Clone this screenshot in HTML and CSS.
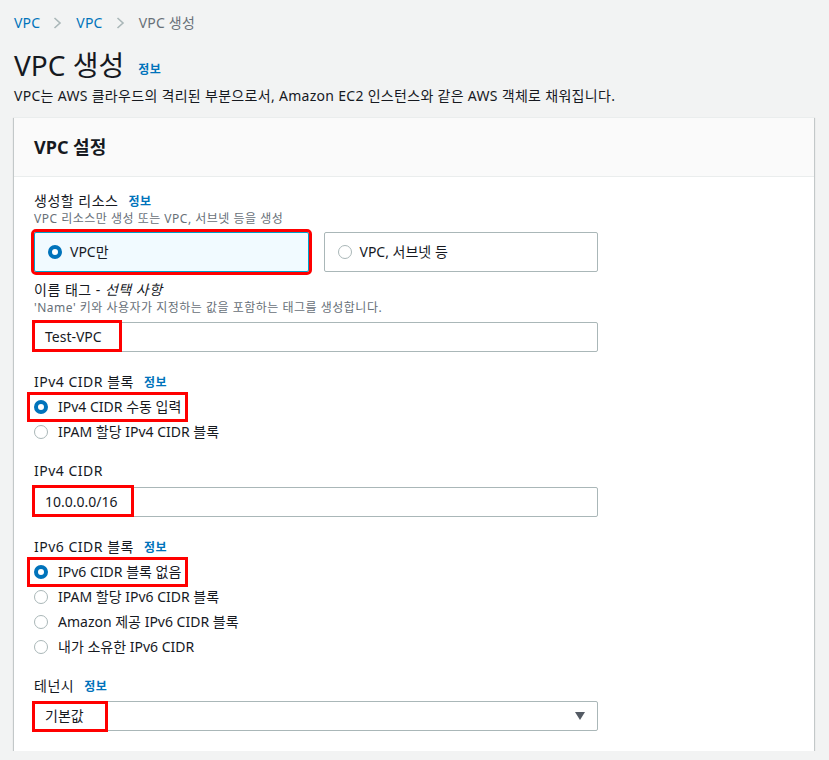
FILE: index.html
```html
<!DOCTYPE html>
<html lang="ko">
<head>
    <meta charset="utf-8">
    <title>VPC 생성</title>
    <link rel="stylesheet" href="styles.css">
</head>
<body>
    <div class="page">
        <!-- Breadcrumbs -->
        <nav class="breadcrumbs">
            <a class="crumb">VPC</a>
            <svg class="chevron" width="9" height="12" viewBox="0 0 9 12"><path d="M1.5 1 L7 6 L1.5 11" fill="none" stroke="#aab7b8" stroke-width="1.6"/></svg>
            <a class="crumb">VPC</a>
            <svg class="chevron" width="9" height="12" viewBox="0 0 9 12"><path d="M1.5 1 L7 6 L1.5 11" fill="none" stroke="#aab7b8" stroke-width="1.6"/></svg>
            <span class="crumb current">VPC 생성</span>
        </nav>

        <div class="page-header">
            <h1>VPC 생성 <a class="info title-info">정보</a></h1>
            <p class="page-desc">VPC는 AWS 클라우드의 격리된 부분으로서, Amazon EC2 인스턴스와 같은 AWS 객체로 채워집니다.</p>
        </div>

        <!-- Settings card -->
        <section class="card">
            <div class="card-header">
                <h2>VPC 설정</h2>
            </div>
            <div class="card-body">
                <div class="field first">
                    <div class="label">생성할 리소스 <a class="info">정보</a></div>
                    <div class="hint">VPC 리소스만 생성 또는 VPC, 서브넷 등을 생성</div>
                    <div class="tiles">
                        <label class="tile selected marked-outline">
                            <span class="radio on"></span>
                            <span>VPC만</span>
                        </label>
                        <label class="tile">
                            <span class="radio"></span>
                            <span>VPC, 서브넷 등</span>
                        </label>
                    </div>
                </div>

                <div class="field after-tiles">
                    <div class="label">이름 태그 - <i>선택 사항</i></div>
                    <div class="hint">'Name' 키와 사용자가 지정하는 값을 포함하는 태그를 생성합니다.</div>
                    <div class="input with-hint">
                        <span class="value mark mark-tag">Test-VPC</span>
                    </div>
                </div>

                <div class="field">
                    <div class="label">IPv4 CIDR 블록 <a class="info">정보</a></div>
                    <div class="radios">
                        <div class="radio-row"><span class="radio-item mark-row"><span class="radio on"></span>IPv4 CIDR 수동 입력</span></div>
                        <div class="radio-row"><span class="radio-item"><span class="radio"></span>IPAM 할당 IPv4 CIDR 블록</span></div>
                    </div>
                </div>

                <div class="field after-radios">
                    <div class="label">IPv4 CIDR</div>
                    <div class="input">
                        <span class="value mark mark-cidr">10.0.0.0/16</span>
                    </div>
                </div>

                <div class="field">
                    <div class="label">IPv6 CIDR 블록 <a class="info">정보</a></div>
                    <div class="radios">
                        <div class="radio-row"><span class="radio-item mark-row"><span class="radio on"></span>IPv6 CIDR 블록 없음</span></div>
                        <div class="radio-row"><span class="radio-item"><span class="radio"></span>IPAM 할당 IPv6 CIDR 블록</span></div>
                        <div class="radio-row"><span class="radio-item"><span class="radio"></span>Amazon 제공 IPv6 CIDR 블록</span></div>
                        <div class="radio-row"><span class="radio-item"><span class="radio"></span>내가 소유한 IPv6 CIDR</span></div>
                    </div>
                </div>

                <div class="field after-radios">
                    <div class="label">테넌시 <a class="info">정보</a></div>
                    <div class="input select">
                        <span class="value mark mark-select">기본값</span>
                        <svg class="caret" width="10" height="8" viewBox="0 0 10 8"><path d="M0 0 H10 L5 8 Z" fill="#545b64"/></svg>
                    </div>
                </div>
            </div>
        </section>
    </div>
</body>
</html>
```

FILE: styles.css
```css
/* Base */
* {
    box-sizing: border-box;
}

body {
    margin: 0;
    background: #f2f3f3;
    color: #16191f;
    font-family: "Noto Sans", "Noto Sans CJK KR", sans-serif;
    font-size: 14px;
    line-height: 20px;
}

a {
    color: #0073bb;
    text-decoration: none;
}

.page {
    padding: 0 15px 0 14px;
}

/* Breadcrumbs */
.breadcrumbs {
    display: flex;
    align-items: center;
    margin-top: 13px;
    height: 20px;
}

.crumb {
    color: #0073bb;
    letter-spacing: 0.2px;
}

.crumb.current {
    color: #687078;
}

.chevron {
    margin: 0 14px 0 13px;
}

/* Page header */
.page-header h1 {
    margin: 14px 0 0;
    height: 36px;
    font-size: 28px;
    line-height: 36px;
    font-weight: 400;
    display: flex;
    align-items: center;
}

.info {
    font-size: 12px;
    font-weight: 700;
    margin-left: 6px;
    letter-spacing: 0.5px;
}

.title-info {
    margin-left: 14px;
    padding-top: 10px;
}

.page-desc {
    margin: 3px 0 0;
    height: 20px;
    letter-spacing: 0.3px;
}

/* Card */
.card {
    margin-top: 11px;
    width: 800px;
    background: #fff;
    box-shadow: 0 1px 1px 0 rgba(0, 28, 36, 0.3),
                1px 1px 1px 0 rgba(0, 28, 36, 0.15),
                -1px 1px 1px 0 rgba(0, 28, 36, 0.15);
    border-top: 1px solid #eaeded;
}

.card-header {
    height: 59px;
    padding: 0 20px;
    display: flex;
    align-items: center;
    background: #fafafa;
    border-bottom: 1px solid #eaeded;
}

.card-header h2 {
    margin: 0;
    font-size: 18px;
    line-height: 24px;
    font-weight: 700;
}

.card-body {
    padding: 14px 20px 20px;
    width: 604px;
}

/* Fields */
.field {
    margin-top: 20px;
}

.field.first {
    margin-top: 0;
}

.field.after-tiles {
    margin-top: 8px;
}

.field.after-radios {
    margin-top: 17px;
}

.label {
    height: 20px;
    letter-spacing: 0.5px;
}

.label i {
    font-style: italic;
}

.hint {
    height: 16px;
    font-size: 12px;
    line-height: 16px;
    color: #687078;
    letter-spacing: 0.5px;
}

/* Tiles */
.tiles {
    margin-top: 5px;
    display: grid;
    grid-template-columns: 1fr 1fr;
    gap: 15px;
}

.tile {
    height: 40px;
    display: flex;
    align-items: center;
    gap: 8px;
    padding-left: 13px;
    border: 1px solid #aab7b8;
    border-radius: 2px;
}

.tile.selected {
    background: #f1faff;
    border-color: #00a1c9;
}

.marked-outline {
    outline: 3px solid #ff0000;
}

/* Radios */
.radio {
    width: 14px;
    height: 14px;
    border-radius: 50%;
    border: 1.5px solid #aab7b8;
    background: #fff;
    flex: none;
}

.radio.on {
    border: 4px solid #0073bb;
}

.radios {
    margin-top: 2px;
}

.radio-row {
    height: 25px;
    display: flex;
    align-items: center;
}

.radio-item {
    position: relative;
    display: inline-flex;
    align-items: center;
    gap: 10px;
    height: 20px;
}

.mark-row::after {
    content: '';
    position: absolute;
    top: -5px;
    bottom: -5px;
    left: -7px;
    right: -7px;
    border: 3px solid #ff0000;
}

/* Inputs */
.input {
    margin-top: 6px;
    height: 30px;
    display: flex;
    align-items: stretch;
    border: 1px solid #aab7b8;
    border-radius: 2px;
    background: #fff;
}

.select {
    margin-top: 5px;
    justify-content: space-between;
    align-items: center;
    padding-right: 12px;
}

.value {
    position: relative;
    display: flex;
    align-items: center;
    align-self: stretch;
    padding: 0 19px 0 10px;
}

.mark::after {
    content: '';
    position: absolute;
    top: -3px;
    bottom: -1px;
    left: -3px;
    right: -1px;
    border: 3px solid #ff0000;
}

.mark-cidr {
    padding-right: 15px;
}

.mark-select {
    padding-right: 23px;
}

.mark-select::after {
    top: -1px;
    bottom: -2px;
}
```
